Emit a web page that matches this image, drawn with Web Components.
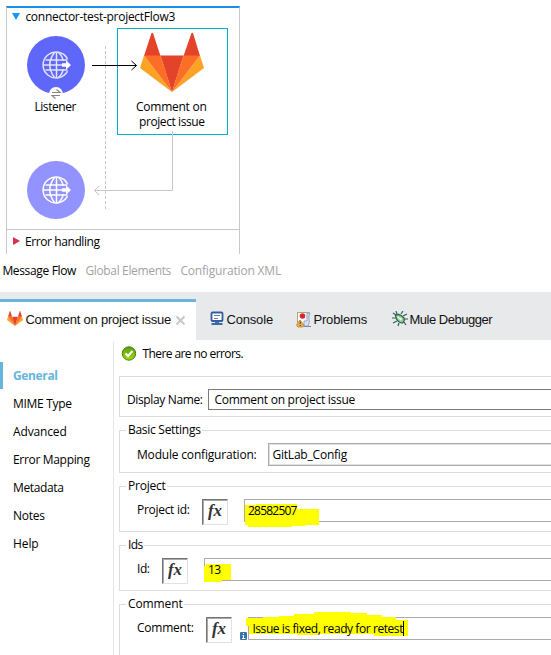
<!DOCTYPE html>
<html lang="en"><head><meta charset="utf-8"><title>Message Flow</title>
<style>
html,body{margin:0;padding:0;background:#fff}
body{width:551px;height:655px;overflow:hidden;font:12px/16px "Open Sans","Noto Sans",sans-serif;color:#000}
</style></head><body>
<studio-window></studio-window>
<script>
const define=(name,html,ready)=>customElements.define(name,class extends HTMLElement{
  connectedCallback(){
    if(this.shadowRoot)return;
    const root=this.attachShadow({mode:'open'});
    root.innerHTML=typeof html==='function'?html(this):html;
    if(ready)ready(this,root);
  }
});

/* One line of text, tracked so that it fills the width given in "w". */
define('fit-text','<style>:host{display:block;white-space:nowrap;flex:none}span{display:inline-block;margin-left:var(--dx,-.6px)}</style><span><slot></slot></span>',(el,root)=>{
  const w=+el.getAttribute('w'),s=root.querySelector('span');
  if(w){
    const n=el.textContent.length;
    s.style.letterSpacing=((w+.6-s.getBoundingClientRect().width)/n)+'px';
    el.style.width=(w+1)+'px';
    el.style.height='16px';
  }
});

define('gitlab-mark',`<style>:host{display:block}svg{display:block;width:100%;height:100%}</style>
<svg viewBox="0 0 64 59" preserveAspectRatio="none"><path d="M11.500 0H13L20.500 23H4ZM51.500 0H53L60 23H43.500Z" fill="#e24329"/><path d="M4 22.500 0 35 32 59ZM60 22.500 64 35 32 59Z" fill="#fca326"/><path d="M4 22.500H20.500L32 59ZM60 22.500H43.500L32 59Z" fill="#fc6d26"/><path d="M20.500 22.500H43.500L32 59Z" fill="#e24329"/></svg>`);

define('http-node',el=>`<style>:host{display:block;width:58px;height:60px}svg{display:block}</style>
<svg width="58" height="66" viewBox="0 0 58 66"><circle cx="29" cy="29" r="29" fill="${el.hasAttribute('dim')?'#9393ff':'#5f67fa'}"/>
<g fill="none" stroke="${el.hasAttribute('dim')?'#fff':'#e3e4ff'}" stroke-width="1.500"><path d="M40.500 22.800A13 13 0 1 0 40.500 35.200"/><path d="M29.500 16V42M16.500 29H35M18.500 24H40.500M18.500 34H40.500M27.500 16.500Q18 29 27.500 41.500M31.500 16.500Q35.500 20 36.200 25M31.500 41.500Q35.500 38 36.200 33"/></g>
<path d="M35 27.300H39V24.300L44 29 39 33.700V30.700H35Z" fill="#fff"/>
${el.hasAttribute('dim')?'':'<circle cx="29" cy="58" r="7" fill="#fff"/><path d="M25 56.500H33L29.500 53.500M33 59.500H25L28.500 62.500" fill="none" stroke="#858585" stroke-width="1.100"/>'}</svg>`);

define('flow-canvas',`<style>
:host{--dx:0px;display:block;position:relative;box-sizing:border-box;width:234px;height:248px;margin:6px 0 0 6px;border:solid #c8c8c8;border-width:0 1px;border-top:2px solid #1b8ee8}
.n{position:absolute}.wires{position:absolute;left:-7px;top:-8px}
.sel{left:110px;top:20px;width:109px;height:105px;border:1px solid #00b0cc}
</style>
<div class="n sel"></div>
<svg class="wires" width="240" height="260" fill="none">
<path d="M12 13H20L16 20Z" fill="#1299f7"/><path d="M13 237 20 241 13 245Z" fill="#d8324e"/>
<path d="M105.500 46V210" stroke="#c6c6c6" stroke-dasharray="3 2"/>
<path d="M92 65.500H136.500M131.500 61 136.500 65.500 131.500 70" stroke="#000"/>
<path d="M172.500 131V190.500H95M99 186 94.500 190.500 99 195" stroke="#c6c6c6"/><path d="M7 229.500H239" stroke="#c8c8c8"/></svg>
<fit-text class="n" w="149" style="left:19px;top:1px;--dx:-.6px">connector-test-projectFlow3</fit-text>
<http-node class="n" style="left:20px;top:28px"></http-node>
<http-node dim class="n" style="left:20px;top:153px"></http-node>
<gitlab-mark class="n" style="left:133px;top:25px;width:64px;height:59px"></gitlab-mark>
<fit-text class="n" w="41" style="left:28px;top:91px;--dx:-.6px">Listener</fit-text>
<fit-text class="n" w="70" style="left:129px;top:91px">Comment on</fit-text>
<fit-text class="n" w="65" style="left:132px;top:106px">project issue</fit-text>
<fit-text class="n" w="74" style="left:18px;top:226px">Error handling</fit-text>`);

define('page-tabs',`<style>:host{display:flex;height:38px;padding:9px 0 0 3px;box-sizing:border-box;gap:9px;color:#a3a3a3}.on{color:#000}</style>
<fit-text class="on" w="73">Message Flow</fit-text><fit-text w="85">Global Elements</fit-text><fit-text w="100">Configuration XML</fit-text>`);

define('view-tabs',`<style>
:host{display:flex;height:48px;box-sizing:border-box;padding-top:7px;background:#e7e9eb;font:13px/16px "Liberation Sans",Arial,sans-serif;color:#111}
.tab{display:flex;align-items:flex-start;padding-top:13px;box-sizing:border-box}.tab svg{display:block;flex:none}
.on{width:196px;height:41px;background:#fff;border-top:3px solid #67b5dc;padding:10px 0 0 7px}
gitlab-mark{width:16px;height:15px;margin:-1px 3px 0 0}
</style>
<div class="tab on"><gitlab-mark></gitlab-mark><fit-text w="145">Comment on project issue</fit-text><svg width="11" height="11" style="margin:3px 0 0 3px"><path d="M1.500 1.500 9.500 9.500M9.500 1.500 1.500 9.500" stroke="#c5c8ca" stroke-width="2"/></svg></div>
<div class="tab" style="margin-left:14px;width:86px"><svg width="14" height="15" style="margin-right:3px;margin-top:-1px"><rect x="1.500" y="1.500" width="11" height="8.500" rx="1" fill="#fff" stroke="#355c9d" stroke-width="1.800"/><path d="M4 4.500H10M4 7.500H8" stroke="#6580a8"/><path d="M5 10H9V12H12.500V14H1.500V12H5Z" fill="#3e67a7"/></svg><fit-text w="46">Console</fit-text></div>
<div class="tab" style="width:96px"><svg width="16" height="17" style="margin:-1px 2px 0 0"><path d="M1 1.500H13.500M1.500 1V13" stroke="#b5a56c"/><path d="M2 2H11V16H6L2 13Z" fill="#fff"/><path d="M11 2H14Q12 5 13 8Q14 11 12 15H8V10H11Z" fill="#dbe5f6" stroke="#91a5c7"/><path d="M7 15.500H15" stroke="#7189b5"/><circle cx="6.500" cy="5" r="2.800" fill="#da2534"/><path d="M4 9 8 14Q8 16 6 16H2Q0 15 1 13Z" fill="#e8ad4c" stroke="#c69343"/><path d="M4.300 10.500V13M4.300 14V15" stroke="#5c471d"/></svg><fit-text w="53">Problems</fit-text></div>
<div class="tab"><svg width="16" height="16" style="margin:-1px 2px 0 0"><path d="M4 4 1 2M5 3 4 0M9 3 11 0M11 5 15 3M4 7H0M5 10 1 12M7 12 6 15M12 8H16M12 11 14 14" stroke="#355e59" stroke-width="1.200"/><path d="M3.500 4.500Q6 2.500 9 4.500L12 7Q13 10 10.500 12Q7 12 4.500 8Z" fill="#9cd18b" stroke="#326463" stroke-width="1.300"/><path d="M5.500 5.500 9 9M7 7 10 8" stroke="#edffd9" stroke-width="1.300"/></svg><fit-text w="82">Mule Debugger</fit-text></div>`);

define('side-nav',`<style>:host{--dx:0px;display:block;width:113px;padding-top:22px;box-sizing:border-box;flex:none}
fit-text{box-sizing:border-box}.i{height:28px;padding:6px 0 0 13px;box-sizing:border-box}
.on{color:#67b5dc;font-weight:bold;padding-left:10px;border-left:3px solid #67b5dc;height:27px;margin-bottom:1px}</style>
<div class="i on"><fit-text w="44">General</fit-text></div><div class="i"><fit-text w="58">MIME Type</fit-text></div><div class="i"><fit-text w="53">Advanced</fit-text></div><div class="i"><fit-text w="76">Error Mapping</fit-text></div><div class="i"><fit-text w="50">Metadata</fit-text></div><div class="i"><fit-text w="31">Notes</fit-text></div><div class="i"><fit-text w="25">Help</fit-text></div>`);

/* Bordered group with its caption set into the top line. */
define('group-box',el=>`<style>:host{--dx:0px;display:block;position:relative;box-sizing:border-box;border:1px solid #dcdcdc;border-right:0}
.cap{position:absolute;left:6px;top:-9px;background:#fff;padding:0 1px 0 2px}.row{display:flex;align-items:flex-start}</style>
${el.hasAttribute('caption')?`<div class="cap"><fit-text w="${el.getAttribute('cw')}">${el.getAttribute('caption')}</fit-text></div>`:''}<div class="row"><slot></slot></div>`);

define('text-field',`<style>:host{display:block;flex:1;box-sizing:border-box;height:23px;border:1px solid #ababaf;border-right:0;padding:3px 0 0 4px;position:relative}
:host([dark]){--dx:-.6px;height:21px;border-color:#7a7a7a;padding:2px 0 0 6px}
:host([double]){--dx:-.6px;box-shadow:inset 1px 1px #e0e0e0,inset 0 -1px #e0e0e0}
.t{position:relative;z-index:1}</style><slot name="mark"></slot><div class="t"><slot></slot></div>`);

define('fx-button',`<style>:host{display:block;flex:none;box-sizing:border-box;width:26px;height:26px;border:1px solid;border-color:#737373 #e1e1e1 #e1e1e1 #737373;box-shadow:inset 1px 1px #aaa;text-align:center;font:italic bold 17px/22px "Liberation Serif",serif;color:#333}</style>fx`);

define('settings-form',`<style>
:host{display:block;flex:1;min-width:0;border-left:1px solid #e5e5e5;padding:4px 0 0 5px;margin-top:2px;height:315px;box-sizing:border-box}
.status{display:flex;height:30px;padding-left:2px;gap:6px}.status svg{display:block}
.m{position:absolute;overflow:visible}
.l{margin-left:17px}.info{align-self:flex-start;margin:12px 1px 0 8px;display:block}
</style>
<div class="status"><svg width="16" height="16"><defs><linearGradient id="g" x2="0" y2="1"><stop stop-color="#579c08"/><stop offset="1" stop-color="#a4db16"/></linearGradient></defs><circle cx="8" cy="7.500" r="6.700" fill="url(#g)" stroke="#458318"/><path d="M4.500 7.500 7 10 11.500 5" fill="none" stroke="#fff" stroke-width="2"/></svg><fit-text w="100">There are no errors.</fit-text></div>
<group-box style="height:41px"><fit-text w="75" style="margin:15px 5px 0 7px">Display Name:</fit-text><text-field dark style="margin-top:12px"><fit-text w="140">Comment on project issue</fit-text></text-field></group-box>
<group-box caption="Basic Settings" cw="72" style="height:43px;margin-top:13px"><fit-text class="l" w="119" style="margin-top:16px">Module configuration:</fit-text><text-field double style="margin:12px 0 0 11px"><fit-text w="74">GitLab_Config</fit-text></text-field></group-box>
<group-box caption="Project" cw="37" style="height:46px;margin-top:13px"><fit-text class="l" w="52" style="margin-top:15px">Project id:</fit-text><fx-button style="margin:12px 16px 0 12px"></fx-button><text-field style="margin-top:12px;padding-left:3px"><svg slot="mark" class="m" style="left:-1px;top:-1px" width="80" height="30"><path d="M1 6H12V5H53V10H75V26H61V27H48V28H4V26H1Z" fill="#ff0"/></svg><fit-text w="48">28582507</fit-text></text-field></group-box>
<group-box caption="Ids" cw="14" style="height:46px;margin-top:13px"><fit-text class="l" w="12" style="margin-top:15px">Id:</fit-text><fx-button style="margin:12px 16px 0 12px"></fx-button><text-field style="margin-top:12px;padding-left:3px"><svg slot="mark" class="m" style="left:-1px;top:-1px" width="30" height="26"><path d="M0 8H2V6H27V22H18V24H0Z" fill="#ff0"/></svg><fit-text w="12">13</fit-text></text-field></group-box>
<group-box caption="Comment" cw="54" style="height:70px;margin-top:13px"><fit-text class="l" w="56" style="margin-top:15px">Comment:</fit-text><fx-button style="margin:12px 0 0 12px"></fx-button><svg class="info" width="7" height="23"><rect y="15" width="7" height="8" rx="1" fill="#3971ac"/><path d="M3.500 18.500V21.500M2 21.500H5.500M2.500 18.500H4M3 16.500H4" stroke="#fff" fill="none"/></svg><text-field style="margin-top:12px;--dx:-.6px"><svg slot="mark" class="m" style="left:-1px;top:-1px" width="164" height="26"><path d="M-2 1H15V0H31V-1H46V-3H66V-5H103V-4H119V-2H134V0H148V3H160V19H126V17H70V18H49V17H1V9H-2Z" fill="#ff0"/><path d="M155.500 4V19" stroke="#000"/></svg><fit-text w="150">Issue is fixed, ready for retest</fit-text></text-field></group-box>`);

define('studio-window',`<style>:host{display:block;width:551px;height:655px;overflow:hidden}.body{display:flex;height:315px}</style>
<flow-canvas></flow-canvas><page-tabs></page-tabs><view-tabs></view-tabs><div class="body"><side-nav></side-nav><settings-form></settings-form></div>`);
</script></body></html>
